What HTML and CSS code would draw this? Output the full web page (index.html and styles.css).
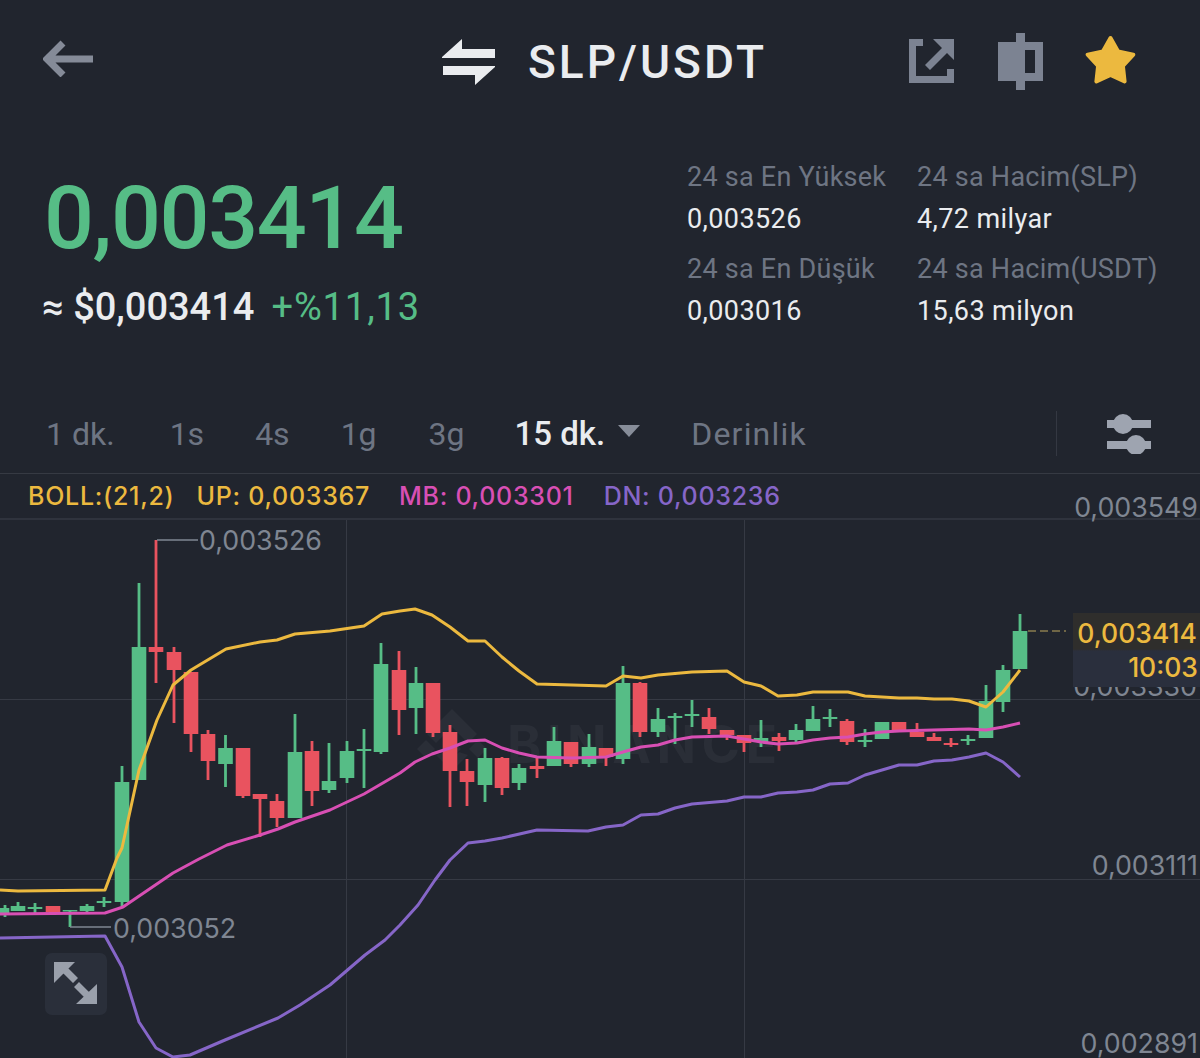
FILE: index.html
```html
<!DOCTYPE html>
<html lang="tr">
<head>
<meta charset="utf-8">
<title>SLP/USDT</title>
<link rel="stylesheet" href="styles.css">
</head>
<body>
<div class="app">
  <header class="topbar">
    <svg class="ico-back" viewBox="0 0 50 37"><path d="M50 19H5M20 3 4 19l16 16"/></svg>
    <div class="pair">
      <svg class="ico-swap" viewBox="0 0 53 46"><path d="M0 18 20 0v10h33v9H0zM1 27h52v1L33 46V36H1z"/></svg>
      <span class="pair-name">SLP/USDT</span>
    </div>
    <div class="actions">
      <svg class="ico-share" viewBox="0 0 45 44"><path d="M0 0h14v7H7v30h31v-7h7v14H0zM24 0h21v21l-7-7-17 17-5-5 17-17z"/></svg>
      <svg class="ico-book" viewBox="0 0 45 57"><path fill-rule="evenodd" d="M18 0h9v9h18v39H27v9h-9v-9H0V9h18zM27 17v23h10V17z"/></svg>
      <svg class="ico-star" viewBox="0 0 51 52"><path d="M25.500 3 33.100 16.500 48.300 19.600 37.900 31 39.600 46.400 25.500 40 11.400 46.400 13.100 31 2.700 19.600 17.900 16.500z"/></svg>
    </div>
  </header>

  <section class="summary">
    <div class="price-block">
      <div class="price">0,003414</div>
      <div class="sub"><span class="sub-usd">≈ $0,003414</span><span class="sub-chg">+%11,13</span></div>
    </div>
    <div class="stats">
      <div class="stat"><div class="stat-label">24 sa En Yüksek</div><div class="stat-value">0,003526</div></div>
      <div class="stat"><div class="stat-label">24 sa Hacim(SLP)</div><div class="stat-value">4,72 milyar</div></div>
      <div class="stat"><div class="stat-label">24 sa En Düşük</div><div class="stat-value">0,003016</div></div>
      <div class="stat"><div class="stat-label">24 sa Hacim(USDT)</div><div class="stat-value">15,63 milyon</div></div>
    </div>
  </section>

  <nav class="tabs">
    <span class="tab t1">1 dk.</span>
    <span class="tab t2">1s</span>
    <span class="tab t3">4s</span>
    <span class="tab t4">1g</span>
    <span class="tab t5">3g</span>
    <span class="tab tab-on">15 dk.<i class="caret"></i></span>
    <span class="tab t7">Derinlik</span>
    <span class="tab-tools">
      <svg class="ico-sliders" viewBox="0 0 44 40"><path d="M0 6h44v8H0zM0 27h44v8H0z"/><circle cx="16" cy="10" r="10"/><circle cx="29" cy="31" r="10"/></svg>
    </span>
  </nav>

  <section class="chart">
    <div class="legend">
      <span class="lg-boll">BOLL:(21,2)</span>
      <span class="lg-up">UP: 0,003367</span>
      <span class="lg-mb">MB: 0,003301</span>
      <span class="lg-dn">DN: 0,003236</span>
      <span class="lg-axis">0,003549</span>
    </div>
    <div class="plot">
      <svg class="plot-svg" viewBox="0 520 1200 538">
        <path class="grid" d="M0 699.500H1200M0 879.500H1200M346.500 520V1058M744.500 520V1058"/>
        <g class="mark">
          <path d="M452 709l25 25-9 9-16-16-16 16-9-9zM452 740l9 9-9 9-9-9zM426 740l9 9-9 9-9-9zM478 740l9 9-9 9-9-9zM452 771l-16-16 9-3 7 7 7-7 9 3z"/>
          <text x="507" y="763" class="mark-text">BINANCE</text>
        </g>
        <path class="wick-g" d="M5 905V917M18 902V911M35 903V913M70 910V927M87 904V912M104 897V907M122 766V906M139 583V780M225.500 735V787M295 714V818M329 743V793M347 741V783M364 729V788M381 643V754M416 667V734M485 748V802M519 764V790M554 727V766M589 734V767M623 666V764M658 708V737M675 713V744M692 700V727M761 720V747M796 724V742M813 706V731M830 709V727M865 729V747M968 735V745M986 685V738M1003 665V712M1020 614V669"/>
        <path class="wick-r" d="M53 906V915M156 540V683M174 647V723M191 672V752M208 730V780M243 748V798M260 794V837M277 794V827M312 741V806M399 651V735M433 683V737M450 725V807M467 759V806M502 757V795M537 758V778M571 742V767M606 748V766M640 682V737M709 708V734M727 730V740M744 735V752M779 733V751M847 719V745M899 722V732M917 723V737M934 733V741M951 738V747"/>
        <path class="body-g" d="M2 908V913M18 906V911M35 907V909M70 910V911.500M87 906V911M104 901V903M122 782V902M139 647V780M225.500 748V764M295 752V818M329 781V790M347 751V778M364 749V751M381 664V752M416 683V708M485 758V785M519 768V783M554 741V766M589 747V764M623 683V759M658 719V732M675 716V718M692 714V716M761 738V742M796 730V740M813 719V731M830 717V719M865 740V742M882 722V739M968 739V741M986 701V738M1003 670V702M1020 631V669"/>
        <path class="body-r" d="M53 906V912M156 647V652M174 652V670M191 672V734M208 734V761M243 748V796M260 794V799M277 801V818M312 751V791M399 670V710M433 683V733M450 732V771M467 771V782M502 758V788M537 766V769M571 742V764M606 748V757M640 683V732M709 717V729M727 730V735M744 735V743M779 737V741M847 721V742M899 722V732M917 732V737M934 737V741M951 743V745"/>
        <polyline class="ln ln-up" points="0,890 18,891 105,890 117,858 122,848 139,770 157,720 173,685 191,670 226,649 260,642 277,640 295,634 330,631 364,626 382,614 400,611 415,609 432,615 450,627 468,641 485,641 502,657 519,671 537,684 572,685 606,686 623,676 641,678 658,675 692,672 727,671 744,682 761,686 778,696 797,695 813,692 848,692 865,696 899,698 917,698 934,699 952,699 969,701 986,707 1003,692 1020,670"/>
        <polyline class="ln ln-mb" points="0,914 105,913 123,907 173,873 199,859 227,845 260,835 278,829 295,822 330,810 364,794 400,773 415,762 432,754 450,748 468,741 485,740 502,748 519,753 537,757 572,758 606,757 623,752 641,747 658,745 675,740 692,737 727,736 744,739 761,742 778,744 797,743 813,740 830,738 848,737 865,734 882,732 899,731 933,730 969,729 986,730 1003,727 1020,723"/>
        <polyline class="ln ln-dn" points="0,938 105,936 122,967 139,1022 156,1048 173,1057 190,1055 225,1040 278,1018 300,1005 330,985 365,955 385,940 400,925 418,905 435,880 450,860 468,843 485,841 502,838 537,830 588,831 606,827 623,825 641,815 658,814 675,808 692,804 727,801 744,797 761,797 778,793 797,792 813,790 830,784 848,783 865,775 882,770 899,765 917,765 934,761 952,760 969,757 986,753 1003,762 1020,777"/>
        <path class="leader" d="M157 540H198M70 927H111"/>
        <path class="last-dash" d="M1028 631H1066"/>
        <text x="199" y="550" class="tag">0,003526</text>
        <text x="113" y="938" class="tag">0,003052</text>
        <text x="1197" y="696" class="tag tag-end">0,003330</text>
        <text x="1198" y="875" class="tag tag-end">0,003111</text>
        <text x="1198" y="1053" class="tag tag-end">0,002891</text>
      </svg>
      <div class="last">
        <div class="last-price">0,003414</div>
        <div class="last-time">10:03</div>
      </div>
      <button class="expand" type="button">
        <svg class="ico-expand" viewBox="0 0 62 62"><path d="M9 9h21L9 30zM22 14l11 11-5 5-11-11zM52 31v20H31zM34 29l11 11-5 5-11-11z"/></svg>
      </button>
    </div>
  </section>
</div>
</body>
</html>
```
FILE: styles.css
```css
* { box-sizing: border-box; }
html, body { margin: 0; padding: 0; }
body { background: #21252e; font-family: Roboto, "Liberation Sans", sans-serif; overflow: hidden; }
.app { width: 1200px; height: 1058px; display: flex; flex-direction: column; }

.topbar { height: 122px; display: flex; align-items: flex-start; padding: 33px 64px 0 43px; }
.ico-back { width: 50px; height: 37px; margin-top: 7px; fill: none; stroke: #858b98; stroke-width: 7; }
.pair { display: flex; align-items: center; gap: 33px; margin-left: 349px; height: 57px; }
.ico-swap { width: 53px; height: 46px; fill: #eaecef; }
.pair-name { font-size: 46px; font-weight: 500; color: #eaecef; letter-spacing: 3px; }
.actions { margin-left: auto; display: flex; align-items: flex-start; }
.ico-share { width: 45px; height: 44px; margin-top: 6px; fill: #7c8392; }
.ico-book { width: 45px; height: 57px; margin-left: 44px; fill: #7c8392; }
.ico-star { width: 51px; height: 52px; margin-left: 42px; margin-top: 2px; fill: #ecb93f; stroke: #ecb93f; stroke-width: 4; stroke-linejoin: round; }

.summary { height: 228px; display: flex; justify-content: space-between; padding: 0 0 0 44px; }
.price { font-size: 88px; font-weight: 500; line-height: 104px; color: #56bd86; margin-top: 44px; letter-spacing: -1.400px; }
.sub { display: flex; gap: 17px; margin-top: 15px; margin-left: -2px; font-size: 38px; line-height: 44px; font-weight: 500; }
.sub-usd { color: #eaecef; }
.sub-chg { color: #56bd86; letter-spacing: .9px; font-weight: 400; }
.stats { display: grid; grid-template-columns: 230px 283px; grid-auto-rows: 92px; padding-top: 34px; }
.stat-label { font-size: 27px; line-height: 42px; color: #6e7583; letter-spacing: .25px; white-space: nowrap; }
.stat-value { font-size: 27px; line-height: 42px; color: #eaecef; letter-spacing: .4px; white-space: nowrap; }

.tabs { height: 124px; display: flex; align-items: center; font-size: 32px; color: #6e7583; padding: 44px 0 0 46px; position: relative; border-bottom: 1px solid #363a43; }
.tab { white-space: nowrap; }
.t2 { margin-left: 55px; }
.t3 { margin-left: 51px; }
.t4 { margin-left: 51px; }
.t5 { margin-left: 52px; }
.tab-on { margin-left: 50px; color: #eaecef; font-weight: 500; font-size: 33px; display: flex; align-items: center; }
.caret { width: 0; height: 0; margin-left: 13px; margin-bottom: 6px; border-left: 11px solid transparent; border-right: 11px solid transparent; border-top: 12px solid #878d99; }
.t7 { margin-left: 51px; letter-spacing: 1.200px; }
.tab-tools { margin-left: auto; height: 45px; width: 144px; border-left: 1px solid #343842; display: flex; align-items: center; padding-left: 50px; }
.ico-sliders { width: 44px; height: 40px; fill: #9ea4b0; }

.chart { flex: 1; display: flex; flex-direction: column; }
.legend { height: 46px; flex: none; display: flex; align-items: center; font-size: 25px; letter-spacing: .72px; font-family: Inter, "Liberation Sans", sans-serif; font-weight: 500; padding: 0 0 0 28px; border-bottom: 2px solid #2f333d; white-space: nowrap; }
.lg-boll { color: #ecb93f; }
.lg-up { color: #ecb93f; margin-left: 22px; }
.lg-mb { color: #d84fb4; margin-left: 29px; }
.lg-dn { color: #8666c8; margin-left: 30px; }
.lg-axis { margin-left: auto; padding-right: 2px; padding-top: 22px; color: #7f8692; font-size: 26.800px; font-weight: 400; letter-spacing: 0; }

.plot { position: relative; flex: 1; }
.plot-svg { display: block; width: 1200px; height: 538px; }
.grid { fill: none; stroke: #363a44; stroke-width: 1; }
.mark { fill: #2a2e37; }
.mark-text { font-family: Inter, "Liberation Sans", sans-serif; font-size: 52px; font-weight: 700; letter-spacing: 5.500px; }
.wick-g, .wick-r { fill: none; stroke-width: 2.800; }
.body-g, .body-r { fill: none; stroke-width: 14.600; }
.wick-g, .body-g { stroke: #56bd86; }
.wick-r, .body-r { stroke: #e9535f; }
.ln { fill: none; stroke-width: 3; stroke-linejoin: round; }
.ln-up { stroke: #ecb93f; }
.ln-mb { stroke: #d84fb4; }
.ln-dn { stroke: #8666c8; }
.leader { fill: none; stroke: #7f8692; stroke-width: 1.500; }
.last-dash { fill: none; stroke: #6f6646; stroke-width: 2; stroke-dasharray: 8 4; }
.tag { font-family: Inter, "Liberation Sans", sans-serif; font-size: 26.800px; fill: #7f8692; }
.tag-end { text-anchor: end; }

.last { position: absolute; left: 1073px; top: 93px; width: 127px; height: 74px; font-family: Inter, "Liberation Sans", sans-serif; font-size: 26.500px; font-weight: 500; color: #ecb93f; text-align: right; white-space: nowrap; line-height: 34px; background: linear-gradient(#2f2e2c 0, #2f2e2c 36px, #2a2f3d 38px, #2a2f3d 100%); }
.last-price { padding-right: 3px; padding-top: 3px; }
.last-time { padding-right: 2px; }
.expand { position: absolute; left: 45px; top: 433px; width: 62px; height: 62px; padding: 0; border: 0; border-radius: 7px; background: #2a2f3a; }
.ico-expand { display: block; width: 62px; height: 62px; fill: #9aa0ab; }
```
